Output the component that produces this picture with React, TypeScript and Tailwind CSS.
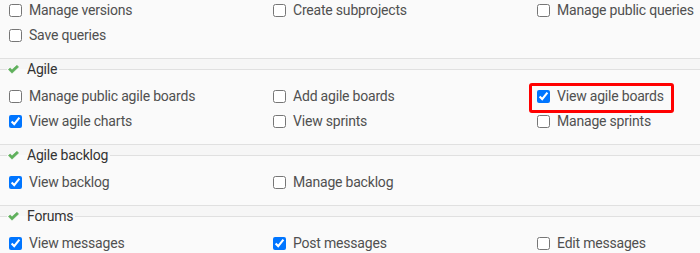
import React from "react";

type Item = { label: string; checked: boolean; highlight?: boolean };

const sections: { title?: string; items: Item[] }[] = [
  {
    items: [
      { label: "Manage versions", checked: false },
      { label: "Create subprojects", checked: false },
      { label: "Manage public queries", checked: false },
      { label: "Save queries", checked: false },
    ],
  },
  {
    title: "Agile",
    items: [
      { label: "Manage public agile boards", checked: false },
      { label: "Add agile boards", checked: false },
      { label: "View agile boards", checked: true, highlight: true },
      { label: "View agile charts", checked: true },
      { label: "View sprints", checked: false },
      { label: "Manage sprints", checked: false },
    ],
  },
  {
    title: "Agile backlog",
    items: [
      { label: "View backlog", checked: true },
      { label: "Manage backlog", checked: false },
    ],
  },
  {
    title: "Forums",
    items: [
      { label: "View messages", checked: true },
      { label: "Post messages", checked: true },
      { label: "Edit messages", checked: false },
    ],
  },
];

function Check() {
  return (
    <svg width="11" height="9" viewBox="0 0 11 9" className="shrink-0">
      <path
        d="M0.4 4.6 L2.1 3.0 L4.0 4.8 L8.9 0.3 L10.6 1.9 L4.0 8.2 Z"
        fill="#5fb05c"
        stroke="#5fb05c"
        strokeWidth="0.6"
        strokeLinejoin="round"
      />
    </svg>
  );
}

function Row({ item }: { item: Item }) {
  return (
    <label className="relative flex h-[25px] items-center gap-[7px] whitespace-nowrap text-[14px] tracking-[-0.2px] text-[#505050]">
      <input type="checkbox" defaultChecked={item.checked} className="m-0 h-[13px] w-[13px] shrink-0" />
      <span>{item.label}</span>
      {item.highlight && (
        <span className="pointer-events-none absolute -left-[8px] -top-[1px] h-[30px] w-[145px] rounded-[3px] border-[3px] border-[#ff0000]" />
      )}
    </label>
  );
}

export default function App() {
  return (
    <div
      className="h-[253px] w-[700px] overflow-hidden bg-[#f6f6f6]"
      style={{ fontFamily: "Roboto, 'Liberation Sans', Arial, sans-serif" }}
    >
      {sections.map((s, i) => (
        <fieldset
          key={i}
          className={
            "m-0 bg-[#fafafa] p-0 pb-[10px] border-[#e0e0e0] " +
            (s.title ? "border-y pt-[4px]" : "-mt-[2px] border-b")
          }
        >
          {s.title && (
            <legend className="ml-[7px] flex h-[21px] items-center gap-[8px] pl-px pr-[2px] text-[14px] leading-[21px] tracking-[-0.2px] text-[#333333]">
              <Check />
              <span>{s.title}</span>
            </legend>
          )}
          <div className="grid grid-cols-[264px_264px_264px] pl-[9px]">
            {s.items.map((it) => (
              <Row key={it.label} item={it} />
            ))}
          </div>
        </fieldset>
      ))}
    </div>
  );
}
